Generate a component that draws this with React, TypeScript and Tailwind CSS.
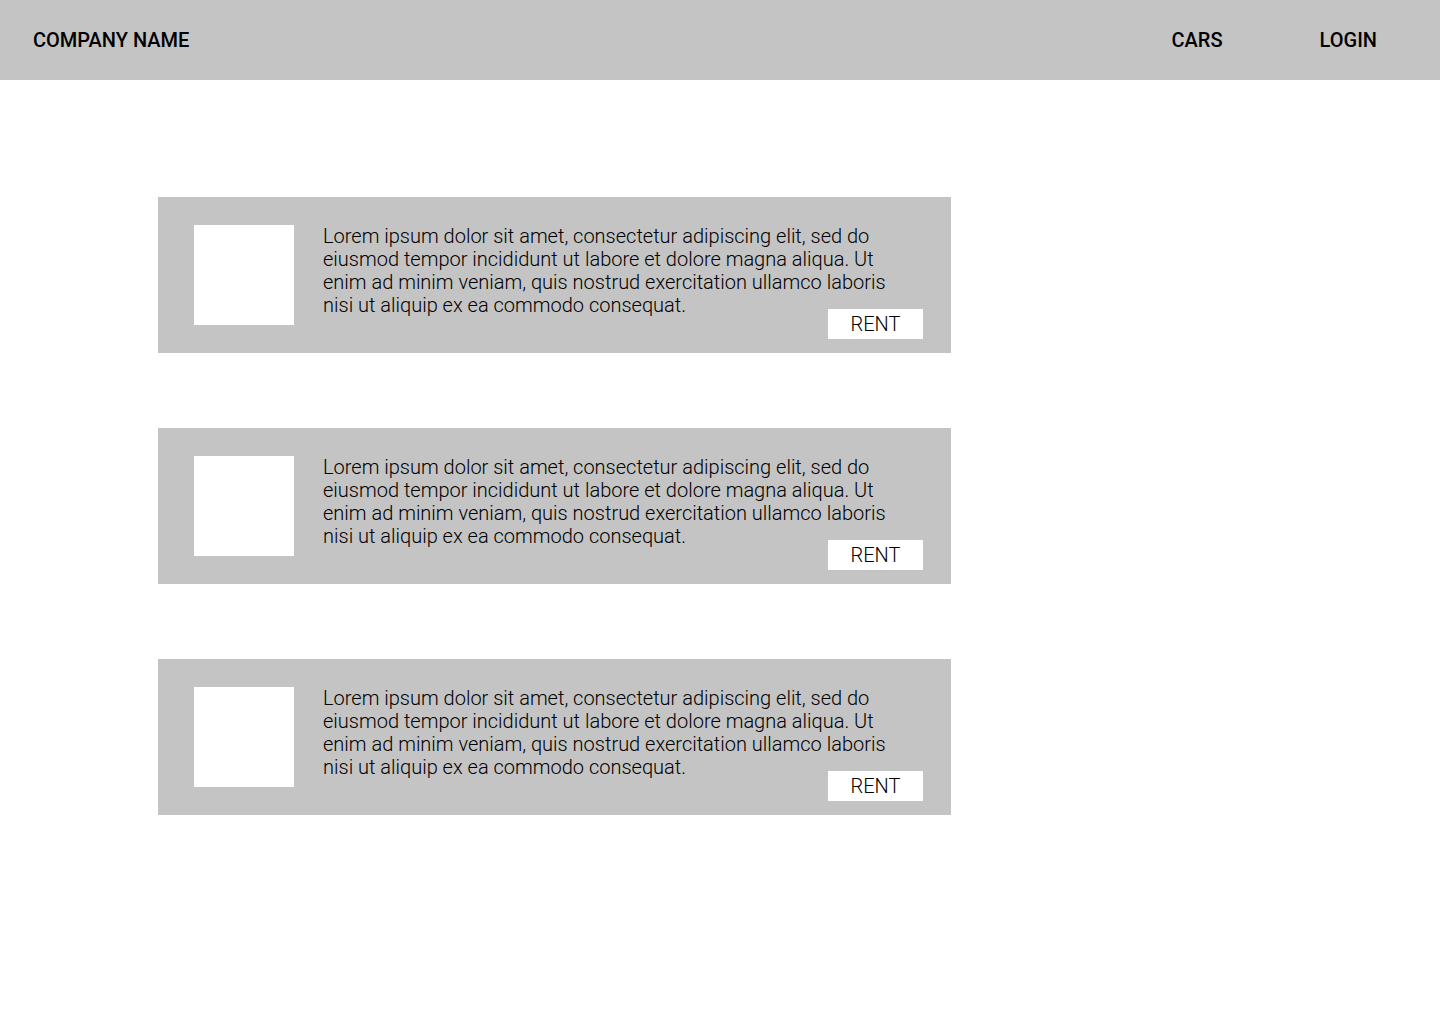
const lorem =
  "Lorem ipsum dolor sit amet, consectetur adipiscing elit, sed do eiusmod tempor incididunt ut labore et dolore magna aliqua. Ut enim ad minim veniam, quis nostrud exercitation ullamco laboris nisi ut aliquip ex ea commodo consequat.";

function CarCard() {
  return (
    <div className="flex h-[156px] w-[793px] bg-[#c4c4c4] pl-[36px] pr-[28px] pt-[28px]">
      <div className="h-[100px] w-[100px] shrink-0 bg-white" />
      <div className="ml-[29px] flex flex-1 flex-col">
        <p className="w-[575px] text-[20px] leading-[23px] font-light text-black">{lorem}</p>
        <div className="-mt-[8px] flex justify-end">
          <button className="flex h-[30px] w-[95px] items-center justify-center bg-white text-[20px] font-light text-black">
            RENT
          </button>
        </div>
      </div>
    </div>
  );
}

export default function App() {
  return (
    <div className="min-h-screen bg-white font-['Roboto',sans-serif]">
      <header className="flex h-[80px] items-center justify-between bg-[#c4c4c4] pl-[33px] pr-[63px]">
        <span className="text-[20px] font-medium text-black">COMPANY NAME</span>
        <nav className="flex gap-[97px] text-[20px] font-medium text-black">
          <a>CARS</a>
          <a>LOGIN</a>
        </nav>
      </header>
      <main className="flex flex-col gap-[75px] pl-[158px] pt-[117px]">
        <CarCard />
        <CarCard />
        <CarCard />
      </main>
    </div>
  );
}
